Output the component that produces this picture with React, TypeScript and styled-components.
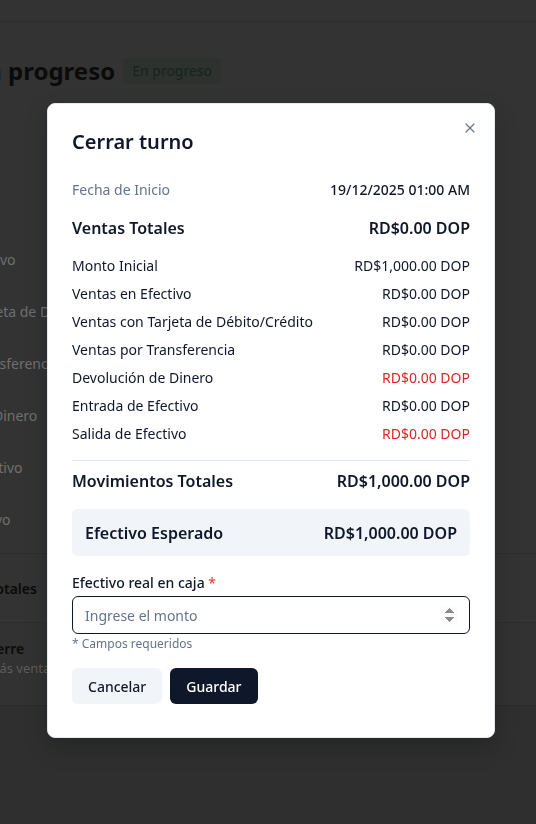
import React from 'react'
import styled, { createGlobalStyle } from 'styled-components'
import { X } from 'lucide-react'

const GlobalStyle = createGlobalStyle`
  html, body {
    margin: 0;
    padding: 0;
    background: #333333;
    font-family: 'Noto Sans', 'Open Sans', sans-serif;
    overflow: hidden;
  }
  * {
    box-sizing: border-box;
  }
`

// pagina de fondo (ya oscurecida por el overlay)
const Page = styled.div`
  min-height: 100vh;
  display: flex;
  flex-direction: column;
  background: #2f2f2f;
`

const TopBar = styled.div`
  height: 22px;
  background: #333333;
  border-bottom: 1px solid #2d2d2d;
`

const Content = styled.div`
  background: #333333;
  margin-left: -104px;
  padding-top: 33px;
  display: flex;
  flex-direction: column;
`

const HeadingRow = styled.div`
  display: flex;
  align-items: center;
  gap: 8px;
`

const PageTitle = styled.h1`
  margin: 0;
  font-size: 24px;
  line-height: 32px;
  font-weight: 700;
  color: #0b0b0b;
`

const Badge = styled.span`
  display: inline-block;
  padding: 2px 9px;
  line-height: 22px;
  font-size: 14px;
  color: #17241b;
  background: #2d322e;
  border-radius: 4px;
`

const SalesList = styled.div`
  margin-top: 146px;
  display: flex;
  flex-direction: column;
`

const SalesItem = styled.div`
  height: 52px;
  display: flex;
  align-items: center;
  font-size: 14px;
  color: #6f6f6f;
`

const BgTotal = styled.div`
  margin-top: 8px;
  border-top: 1px solid #2e2e2e;
  height: 69px;
  display: flex;
  align-items: center;
  font-size: 14px;
  font-weight: 600;
  color: #0b0b0b;
`

const BgCard = styled.div`
  border-top: 1px solid #2e2e2e;
  border-bottom: 1px solid #2b2b2b;
  background: #323232;
  height: 84px;
  padding: 16px 0 0 31px;
  display: flex;
  flex-direction: column;
`

const BgCardTitle = styled.div`
  font-size: 14px;
  line-height: 20px;
  font-weight: 600;
  color: #0b0b0b;
`

const BgCardText = styled.div`
  font-size: 13px;
  line-height: 18px;
  color: #5c5c5c;
`

// modal
const Modal = styled.div`
  position: fixed;
  left: 47px;
  top: 103px;
  width: 448px;
  background: #ffffff;
  border: 1px solid #e2e8f0;
  border-radius: 8px;
  padding: 24px 24px 33px;
  box-shadow: 0 10px 25px rgba(0, 0, 0, 0.2);
  color: #0f172a;
`

const CloseButton = styled.button`
  position: absolute;
  top: 16px;
  right: 16px;
  width: 16px;
  height: 16px;
  padding: 0;
  border: none;
  background: none;
  color: #64748b;
  display: flex;
  align-items: center;
  justify-content: center;
`

const Title = styled.h2`
  margin: 0 0 24px;
  font-size: 20px;
  line-height: 28px;
  font-weight: 600;
`

const Row = styled.div<{ $big?: boolean; $gap?: number }>`
  display: flex;
  justify-content: space-between;
  align-items: center;
  margin-top: ${(p) => p.$gap ?? 8}px;
  font-size: ${(p) => (p.$big ? 16 : 14)}px;
  line-height: ${(p) => (p.$big ? 24 : 20)}px;
  font-weight: ${(p) => (p.$big ? 600 : 400)};
`

const Label = styled.span<{ $muted?: boolean }>`
  color: ${(p) => (p.$muted ? '#64748b' : '#0f172a')};
`

const Value = styled.span<{ $red?: boolean; $medium?: boolean }>`
  color: ${(p) => (p.$red ? '#dc2626' : '#0f172a')};
  font-weight: ${(p) => (p.$medium ? 500 : 'inherit')};
`

const Divider = styled.div`
  margin-top: 16px;
  height: 1px;
  background: #e2e8f0;
`

const Expected = styled.div`
  margin-top: 16px;
  background: #f1f5f9;
  border-radius: 6px;
  padding: 12px 13px 11px;
  display: flex;
  justify-content: space-between;
  font-size: 16px;
  line-height: 24px;
  font-weight: 600;
`

const Field = styled.div`
  margin-top: 17px;
  display: flex;
  flex-direction: column;
`

const FieldLabel = styled.label`
  font-size: 14px;
  line-height: 20px;
  font-weight: 500;
  margin-bottom: 3px;
  span {
    color: #ef4444;
  }
`

const Input = styled.input`
  height: 38px;
  width: 100%;
  border: 1px solid #0f172a;
  border-radius: 6px;
  padding: 0 12px;
  font-family: inherit;
  font-size: 14px;
  color: #0f172a;
  caret-color: #0f172a;
  outline: none;
  &::placeholder {
    color: #64748b;
  }
`

const Hint = styled.div`
  margin-top: 2px;
  font-size: 12px;
  line-height: 16px;
  color: #64748b;
`

const Actions = styled.div`
  margin-top: 16px;
  display: flex;
  gap: 8px;
`

const Button = styled.button<{ $primary?: boolean }>`
  height: 36px;
  padding: 0 16px;
  border: none;
  border-radius: 6px;
  font-family: inherit;
  font-size: 14px;
  font-weight: 500;
  background: ${(p) => (p.$primary ? '#0f172a' : '#f1f5f9')};
  color: ${(p) => (p.$primary ? '#ffffff' : '#0f172a')};
`

const movimientos = [
  { label: 'Monto Inicial', value: 'RD$1,000.00 DOP' },
  { label: 'Ventas en Efectivo', value: 'RD$0.00 DOP' },
  { label: 'Ventas con Tarjeta de Débito/Crédito', value: 'RD$0.00 DOP' },
  { label: 'Ventas por Transferencia', value: 'RD$0.00 DOP' },
  { label: 'Devolución de Dinero', value: 'RD$0.00 DOP', red: true },
  { label: 'Entrada de Efectivo', value: 'RD$0.00 DOP' },
  { label: 'Salida de Efectivo', value: 'RD$0.00 DOP', red: true },
]

const fondo = [
  'Ventas en Efectivo',
  'Ventas con Tarjeta de Débito/Crédito',
  'Ventas por Transferencia',
  'Devolución de Dinero',
  'Entrada de Efectivo',
  'Salida de Efectivo',
]

function App() {
  return (
    <>
      <GlobalStyle />
      <Page>
        <TopBar />
        <Content>
          <HeadingRow>
            <PageTitle>Turno en progreso</PageTitle>
            <Badge>En progreso</Badge>
          </HeadingRow>
          <SalesList>
            {fondo.map((f) => (
              <SalesItem key={f}>{f}</SalesItem>
            ))}
          </SalesList>
          <BgTotal>Movimientos Totales</BgTotal>
          <BgCard>
            <BgCardTitle>Realizar cierre</BgCardTitle>
            <BgCardText>No habrá más ventas en este turno después del cierre</BgCardText>
          </BgCard>
        </Content>
      </Page>

      {/* modal de cierre de turno */}
      <Modal>
        <CloseButton>
          <X size={16} strokeWidth={1.75} />
        </CloseButton>
        <Title>Cerrar turno</Title>

        <Row $gap={0}>
          <Label $muted>Fecha de Inicio</Label>
          <Value $medium>19/12/2025 01:00 AM</Value>
        </Row>
        <Row $big $gap={16}>
          <Label>Ventas Totales</Label>
          <Value>RD$0.00 DOP</Value>
        </Row>
        {movimientos.map((m, i) => (
          <Row key={m.label} $gap={i === 0 ? 16 : 8}>
            <Label>{m.label}</Label>
            <Value $red={m.red}>{m.value}</Value>
          </Row>
        ))}
        <Divider />
        <Row $big $gap={8}>
          <Label>Movimientos Totales</Label>
          <Value>RD$1,000.00 DOP</Value>
        </Row>
        <Expected>
          <span>Efectivo Esperado</span>
          <span>RD$1,000.00 DOP</span>
        </Expected>

        <Field>
          <FieldLabel>
            Efectivo real en caja <span>*</span>
          </FieldLabel>
          <Input type="number" placeholder="Ingrese el monto" autoFocus />
          <Hint>* Campos requeridos</Hint>
        </Field>

        <Actions>
          <Button>Cancelar</Button>
          <Button $primary>Guardar</Button>
        </Actions>
      </Modal>
    </>
  )
}

export default App
